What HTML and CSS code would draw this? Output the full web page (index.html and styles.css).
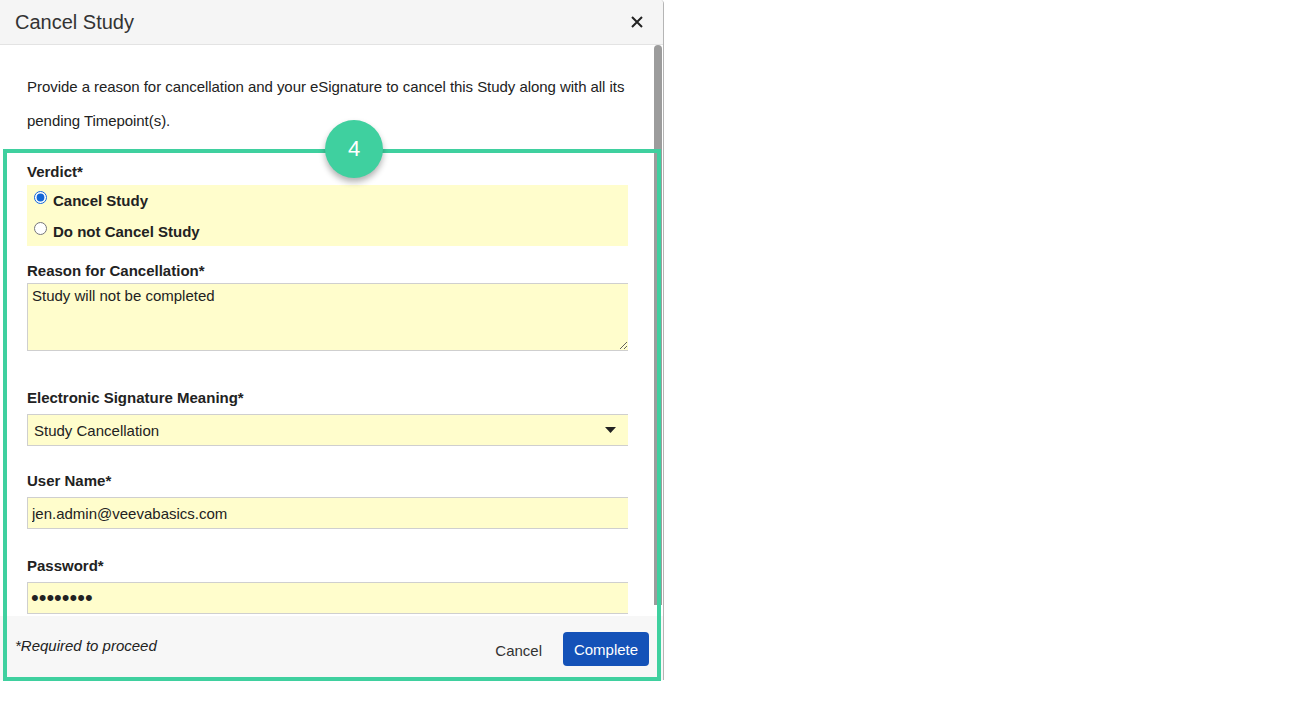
FILE: index.html
```html
<!DOCTYPE html>
<html lang="en">
<head>
  <meta charset="UTF-8" />
  <title>Cancel Study</title>
  <link rel="stylesheet" href="styles.css">
</head>
<body>
  <div class="dialog">
    <header class="dialog-header">
      <h1>Cancel Study</h1>
      <button class="close-btn" aria-label="Close">
        <svg width="12" height="12" viewBox="0 0 12 12"><path d="M1 1L11 11M11 1L1 11" stroke="#222" stroke-width="2" fill="none"/></svg>
      </button>
    </header>

    <div class="dialog-body">
      <p class="intro">Provide a reason for cancellation and your eSignature to cancel this Study along with all its pending Timepoint(s).</p>

      <div class="field field-verdict">
        <label class="field-label">Verdict*</label>
        <div class="radio-group">
          <label class="radio-row"><input type="radio" name="verdict" checked> Cancel Study</label>
          <label class="radio-row"><input type="radio" name="verdict"> Do not Cancel Study</label>
        </div>
      </div>

      <div class="field field-reason">
        <label class="field-label">Reason for Cancellation*</label>
        <textarea class="input textarea">Study will not be completed</textarea>
      </div>

      <div class="field field-sig">
        <label class="field-label">Electronic Signature Meaning*</label>
        <div class="select-wrap">
          <select class="input select">
            <option>Study Cancellation</option>
          </select>
          <svg class="select-arrow" width="11" height="6" viewBox="0 0 11 6"><path d="M0 0H11L5.5 6Z" fill="#222"/></svg>
        </div>
      </div>

      <div class="field">
        <label class="field-label">User Name*</label>
        <input class="input" type="text" value="jen.admin@veevabasics.com">
      </div>

      <div class="field">
        <label class="field-label">Password*</label>
        <input class="input password" type="password" value="12345678">
      </div>

      <div class="scrollbar"></div>
    </div>

    <footer class="dialog-footer">
      <span class="required-note">*Required to proceed</span>
      <div class="footer-actions">
        <button class="btn-link">Cancel</button>
        <button class="btn-primary">Complete</button>
      </div>
    </footer>
  </div>

  <div class="callout"></div>
  <div class="callout-badge">4</div>
</body>
</html>
```

FILE: styles.css
```css
body {
  font-family: "Liberation Sans", Arial, sans-serif;
  background: #fff;
  color: #222;
  margin: 0;
  padding: 0;
}
.dialog {
  width: 664px;
  height: 680px;
  display: flex;
  flex-direction: column;
  border-right: 1px solid #b5b5b5;
  border-top-right-radius: 4px;
  box-sizing: border-box;
  overflow: hidden;
}
.dialog-header {
  height: 45px;
  flex: none;
  box-sizing: border-box;
  background: #f5f5f5;
  border-bottom: 1px solid #e3e3e3;
  display: flex;
  align-items: center;
  justify-content: space-between;
  padding: 0 20px 0 15px;
}
.dialog-header h1 {
  margin: 0;
  font-size: 20px;
  font-weight: normal;
  color: #333;
}
.close-btn {
  background: none;
  border: none;
  padding: 0;
  display: flex;
  cursor: pointer;
}
.dialog-body {
  flex: 1;
  position: relative;
  overflow: hidden;
  padding: 25px 35px 0 27px;
}
.intro {
  margin: 0 -12px 24px 0;
  font-size: 15px;
  line-height: 34px;
  letter-spacing: -0.05px;
  color: #222;
}
.field {
  margin-bottom: 27px;
}
.field-verdict {
  margin-bottom: 15px;
}
.field-sig {
  margin-bottom: 25px;
}
.field-label {
  display: block;
  font-size: 15px;
  line-height: 20px;
  font-weight: bold;
  margin-bottom: 6px;
}
.radio-group {
  background: #fffdcc;
  margin-top: -3px;
  padding: 0 0 2px 5px;
  height: 61px;
  box-sizing: border-box;
}
.radio-row {
  display: flex;
  align-items: center;
  height: 31px;
  font-size: 15px;
  font-weight: bold;
  gap: 4px;
}
.radio-row input {
  margin: -6px 2px 0 2px;
  width: 13px;
  height: 13px;
  accent-color: #1266d6;
}
.input {
  display: block;
  width: 100%;
  box-sizing: border-box;
  height: 32px;
  background: #fffdcc;
  border: 1px solid #cfcfcf;
  border-right: none;
  font-family: inherit;
  font-size: 15px;
  color: #222;
  padding: 0 4px;
  outline: none;
}
.field-reason {
  margin-bottom: 37px;
}
.field-reason .field-label {
  margin-bottom: 2px;
}
.textarea {
  height: 68px;
  padding: 3px 4px;
  resize: vertical;
}
.select-wrap {
  position: relative;
}
.select {
  appearance: none;
  padding: 0 6px;
}
.select-arrow {
  position: absolute;
  right: 12px;
  top: 13px;
  pointer-events: none;
}
.password {
  font-size: 22px;
  padding-left: 3px;
}
.scrollbar {
  position: absolute;
  top: 0;
  right: 1px;
  width: 8px;
  height: 560px;
  background: #9c9c9c;
  border-radius: 4px 4px 0 0;
}
.dialog-footer {
  flex: none;
  height: 64px;
  background: #f7f7f7;
  display: flex;
  justify-content: space-between;
  align-items: flex-start;
  padding: 0 14px 0 15px;
}
.required-note {
  font-style: italic;
  font-size: 15px;
  color: #222;
  margin-top: 21px;
}
.footer-actions {
  display: flex;
  align-items: center;
  gap: 21px;
  margin-top: 16px;
}
.btn-link {
  background: none;
  border: none;
  font-family: inherit;
  font-size: 15px;
  color: #333;
  padding: 0;
  margin-top: 2px;
}
.btn-primary {
  background: #1452b8;
  color: #fff;
  border: none;
  border-radius: 4px;
  font-family: inherit;
  font-size: 15px;
  height: 34px;
  width: 86px;
  padding: 0;
}
.callout {
  position: absolute;
  left: 3px;
  top: 149px;
  width: 658px;
  height: 532px;
  box-sizing: border-box;
  border: 4px solid #3fd09f;
  pointer-events: none;
}
.callout-badge {
  position: absolute;
  left: 325px;
  top: 120px;
  width: 58px;
  height: 58px;
  border-radius: 50%;
  background: #3fd09f;
  color: #fff;
  font-size: 22px;
  display: flex;
  align-items: center;
  justify-content: center;
  box-shadow: 0 4px 6px rgba(0, 0, 0, 0.3);
}
```
